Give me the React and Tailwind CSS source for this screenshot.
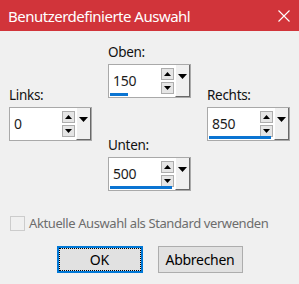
import React from "react";

function SpinBox({ value, bar }) {
  return (
    <div className="flex h-[34px] w-[83px] border border-[#a9a9a9] bg-white">
      <div className="relative flex flex-1 items-start">
        <span className="mt-[7px] pl-[4px] text-[14px] leading-[18px] tracking-[-0.2px] text-[#1c1c1c]">{value}</span>
        <div className="ml-auto mr-[1px] mt-[3px] flex flex-col gap-[2px]">
          <div className="flex h-[12px] w-[13px] items-center justify-center border border-[#adadad] bg-[#e5e5e5]">
            <svg width="7" height="4" viewBox="0 0 7 4"><polygon points="0,4 7,4 3.5,0" fill="#000" /></svg>
          </div>
          <div className="flex h-[12px] w-[13px] items-center justify-center border border-[#adadad] bg-[#e5e5e5]">
            <svg width="7" height="4" viewBox="0 0 7 4"><polygon points="0,0 7,0 3.5,4" fill="#000" /></svg>
          </div>
        </div>
        <div
          className="absolute bottom-[1px] left-[1px] h-[3px] bg-[#0a74d2]"
          style={{ width: bar }}
        />
      </div>
      <div className="flex w-[15px] justify-center border-l border-l-white border-r border-r-[#696969] border-b border-b-[#696969] bg-[#f0f0f0] pt-[9px]">
        <svg width="9" height="5" viewBox="0 0 9 5"><polygon points="0,0 9,0 4.5,5" fill="#000" /></svg>
      </div>
    </div>
  );
}

function Field({ label, value, bar }) {
  return (
    <div className="flex flex-col">
      <div className="mb-[4px] h-[16px] text-[13.5px] leading-[16px] tracking-[-0.3px] text-[#111]">{label}</div>
      <SpinBox value={value} bar={bar} />
    </div>
  );
}

export default function App() {
  return (
    <div
      className="flex h-[284px] w-[299px] flex-col bg-[#f0f0f0]"
      style={{ fontFamily: '"Noto Sans", "Open Sans", sans-serif' }}
    >
      <div className="flex h-[31px] items-center bg-[#d1343a] pl-[8px] pr-[9px] text-white">
        <span className="text-[15px] leading-[20px] tracking-[-0.5px]">Benutzerdefinierte Auswahl</span>
        <svg className="ml-auto" width="12" height="12" viewBox="0 0 12 12">
          <path d="M0.5 0.5 L11.5 11.5 M11.5 0.5 L0.5 11.5" stroke="#fff" strokeWidth="1.1" />
        </svg>
      </div>
      <div className="flex gap-[16px] pl-[9px]">
        <div className="pt-[56px]">
          <Field label="Links:" value="0" bar={0} />
        </div>
        <div className="flex flex-col gap-[39px] pt-[13px]">
          <Field label="Oben:" value="150" bar={18} />
          <Field label="Unten:" value="500" bar={62} />
        </div>
        <div className="pt-[56px]">
          <Field label="Rechts:" value="850" bar={62} />
        </div>
      </div>
      <div className="mt-[23px] flex items-center pl-[10px]">
        <div className="h-[15px] w-[15px] border border-[#cccccc] bg-[#f0f0f0]" />
        <span className="ml-[4px] whitespace-nowrap text-[13px] leading-[18px] tracking-[-0.4px] text-[#6d6d6d]">
          Aktuelle Auswahl als Standard verwenden
        </span>
      </div>
      <div className="mt-[14px] flex justify-center gap-[15px]">
        <div className="flex h-[27px] w-[86px] items-center justify-center border-2 border-[#0078d7] bg-[#e1e1e1]">
          <div className="flex h-full w-full items-center justify-center border border-dotted border-[#000] text-[14px] text-black">
            OK
          </div>
        </div>
        <div className="flex h-[27px] w-[85px] items-center justify-center border border-[#adadad] bg-[#e1e1e1] text-[14px] tracking-[-0.3px] text-black">
          Abbrechen
        </div>
      </div>
    </div>
  );
}
